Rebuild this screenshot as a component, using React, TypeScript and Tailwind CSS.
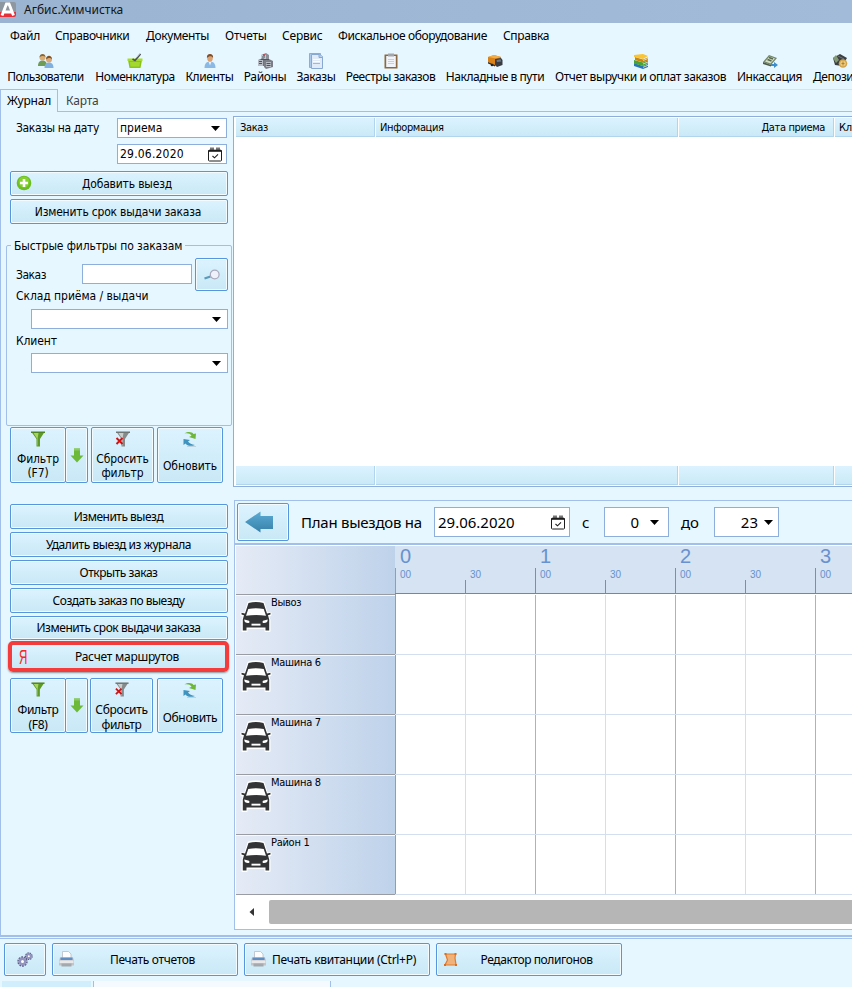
import type { ReactNode } from "react";
import clsx from "clsx";

const ui = "font-['Noto_Sans','Open_Sans',sans-serif] text-[12px]";
const tahoma = "font-['DejaVu_Sans_Condensed','DejaVu_Sans',sans-serif] text-[12px]";

const menu = [
  { label: "Файл", cls: "w-[29px] tracking-[-0.2px]" },
  { label: "Справочники", cls: "w-[75px] tracking-[-0.36px]" },
  { label: "Документы", cls: "w-[63px] tracking-[-0.36px]" },
  { label: "Отчеты", cls: "w-[41px] tracking-[-0.2px]" },
  { label: "Сервис", cls: "w-[40px] tracking-[-0.2px]" },
  { label: "Фискальное оборудование", cls: "w-[149px] tracking-[-0.35px]" },
  { label: "Справка", cls: "w-[46px] tracking-[-0.36px]" },
];

const tools = [
  { label: "Пользователи", icon: <UsersIcon />, cls: "w-[77px] tracking-[-0.48px]" },
  { label: "Номенклатура", icon: <BasketIcon />, cls: "w-[80px] tracking-[-0.45px]" },
  { label: "Клиенты", icon: <ClientIcon />, cls: "w-[47px] tracking-[-0.35px]" },
  { label: "Районы", icon: <DistrictIcon />, cls: "w-[42px] tracking-[-0.35px]" },
  { label: "Заказы", icon: <DocsIcon />, cls: "w-[38px] tracking-[-0.4px]" },
  { label: "Реестры заказов", icon: <ClipboardIcon />, cls: "w-[89px] tracking-[-0.47px]" },
  { label: "Накладные в пути", icon: <TruckIcon />, cls: "w-[98px] tracking-[-0.45px]" },
  { label: "Отчет выручки и оплат заказов", icon: <BooksIcon />, cls: "w-[171px] tracking-[-0.38px]" },
  { label: "Инкассация", icon: <CashIcon />, cls: "w-[65px] tracking-[-0.43px]" },
  { label: "Депозиты", icon: <WalletIcon />, cls: "w-[54px] tracking-[-0.45px]" },
];

const cars = ["Вывоз", "Машина 6", "Машина 7", "Машина 8", "Район 1"];
const hours = [0, 1, 2, 3];

const journalActions = [
  { label: "Изменить выезд", cls: "h-[25px] tracking-[-0.5px]" },
  { label: "Удалить выезд из журнала", cls: "h-[25px] tracking-[-0.43px]" },
  { label: "Открыть заказ", cls: "h-[25px] tracking-[-0.45px]" },
  { label: "Создать заказ по выезду", cls: "h-[25px] tracking-[-0.5px]" },
  { label: "Изменить срок выдачи заказа", cls: "h-[24px] tracking-[-0.44px]" },
];

function UsersIcon() {
  return (
    <svg width="16" height="16" viewBox="0 0 16 16">
      <path d="M0 13c0-4 2-5.500 4.500-5.500S9 9 9 13z" fill="#6d9c56" />
      <circle cx="4.500" cy="4.500" r="3" fill="#d9ad74" />
      <path d="M1.500 4.500C1.500 0 7.500 0 7.500 4 6 2.500 3 2.500 1.500 4.500z" fill="#86683c" />
      <path d="M6.500 15c0-4 2-5.500 4.500-5.500s4.500 1.500 4.500 5.500z" fill="#7fb0e0" />
      <circle cx="11" cy="6.500" r="3" fill="#dba878" />
      <path d="M8 6.500C8 1.500 14 1.500 14 6.500c-1-2-4-2-6 0z" fill="#7c5227" />
    </svg>
  );
}

function BasketIcon() {
  return (
    <svg width="16" height="16" viewBox="0 0 16 16">
      <path d="M1 7h14l-1.500 8h-11z" fill="#8ac416" />
      <path d="M.5 5.500h15V8H.5z" fill="#a4dc2b" />
      <path d="M3 9h10l-.6 4.500H3.600z" fill="#a3d92f" />
      <path d="m5.500 6 2.500 1.500L13.500 1" fill="none" stroke="#4b5055" strokeWidth="1.700" />
      <path d="m9.500 4.500 3.500-4" stroke="#b9c0c4" strokeWidth="1" />
    </svg>
  );
}

function ClientIcon() {
  return (
    <svg width="16" height="16" viewBox="0 0 16 16">
      <path d="M2.500 15c0-4.500 2.200-6.500 5.500-6.500s5.500 2 5.500 6.500z" fill="#8bb9e6" />
      <path d="m6.500 8.500 1.500 4 1.500-4z" fill="#e9f2fb" />
      <ellipse cx="8" cy="5" rx="2.800" ry="3.800" fill="#dba274" />
      <path d="M5 5C4-.5 12-.5 11 5 10 2.500 7 2.500 5 5z" fill="#7a4d2b" />
    </svg>
  );
}

function DistrictIcon() {
  return (
    <svg width="16" height="16" viewBox="0 0 16 16">
      <path d="M4 2 9 0l3 2v5H4z" fill="#8d8f98" />
      <path d="M4 2h5v5H4z" fill="#c4c8d0" />
      <path d="M1 7l5-2 3 2v6H1z" fill="#6f737d" />
      <path d="M7 8l5-2 4 2v6l-7 2-2-2z" fill="#7b7e87" />
      <path d="M1 7h5v6H1zM9 9h5v5H9z" fill="#b7bbc4" />
      <path d="M6 1h2v2H6z" fill="#b8545c" />
      <path d="M2 8.500h3M2 10.500h3M9.500 10.500h4M9.500 12.500h4M5 4h3M4 6.500h8" stroke="#4f535b" />
    </svg>
  );
}

function DocsIcon() {
  return (
    <svg width="16" height="16" viewBox="0 0 16 16">
      <path d="M1.500.5h11v14h-11z" fill="#a9c8ea" stroke="#8badd8" />
      <path d="M3.500 1.500h8l3 2v12h-11z" fill="#e1ebf8" stroke="#86a8d3" />
      <path d="M11 1.500v3h3.500" fill="#b9cfe9" stroke="#86a8d3" />
      <path d="M5 6.500h7M5 8.500h7" stroke="#f8fbff" />
      <path d="M5 10.500h7" stroke="#9db8dc" />
    </svg>
  );
}

function ClipboardIcon() {
  return (
    <svg width="16" height="16" viewBox="0 0 16 16">
      <path d="M1.500 1.500h13v14h-13z" fill="#8d6840" />
      <path d="M3.200 3h9.600v11H3.200z" fill="#f1f4fa" />
      <path d="M5 .5h6v3H5z" fill="#a3a6aa" />
      <path d="M5 6.500h6M5 8.500h6M5 10.500h6" stroke="#c4d0e6" />
    </svg>
  );
}

function TruckIcon() {
  return (
    <svg width="16" height="16" viewBox="0 0 16 16">
      <path d="m1 4 6-2 7 2v7l-5 2-8-4z" fill="#d9821a" />
      <path d="m1 4 6-2 7 2-5 1.500z" fill="#f3ae48" />
      <path d="m8 6 6-1 1.500 2v5L10 14l-2-2z" fill="#3a3c42" />
      <path d="m9.500 7 4-.7.8 2.200-4.300.5z" fill="#6d7987" />
      <path d="m1 9 7 3v1.500L1 10.500z" fill="#302e2c" />
      <circle cx="5" cy="12" r="1.300" fill="#222" />
    </svg>
  );
}

function BooksIcon() {
  return (
    <svg width="16" height="16" viewBox="0 0 16 16">
      <path d="m1 10 9 3 5-2v3l-5 2-9-3z" fill="#2877b9" />
      <path d="m1 7 9 2.500 5-2v3L10 13l-9-2.500z" fill="#49a336" />
      <path d="m2 4 8 2.500 5-2v3L10 9.500 2 7z" fill="#c98712" />
      <path d="m1 2 9-1 5 2-5 3-9-2z" fill="#fac432" />
      <path d="m10 7.500 5-2M10 11l5-2M10 14.300l5-2" stroke="#d9d4bd" />
    </svg>
  );
}

function CashIcon() {
  return (
    <svg width="16" height="16" viewBox="0 0 16 16">
      <path d="m1 9 6-7 8 3-6 7z" fill="#71866a" />
      <path d="m3 8.500 4.500-5 5.500 2L8.500 10.500z" fill="#d1dfc4" />
      <path d="m5.500 6.500 4 1.500M7 4.500l4 1.500" stroke="#56684f" strokeWidth="1.400" />
      <path d="m1 9 8 3v1.500L1 11z" fill="#4c5b4b" />
      <path d="M9 11h3V9l4 3-4 3v-2H9z" fill="#3b8fcd" />
    </svg>
  );
}

function WalletIcon() {
  return (
    <svg width="16" height="16" viewBox="0 0 16 16">
      <path d="m1 5 7-4 7 4-5 8-7-1z" fill="#3c3f41" />
      <path d="m1 5 3-3 3 5-3 3z" fill="#829a74" />
      <path d="m6 3 6 3" stroke="#73787a" />
      <circle cx="11" cy="10.500" r="4.300" fill="#d1a44d" />
      <circle cx="11" cy="10.500" r="2.800" fill="#edcb80" />
      <path d="M11 8.500v4M9.500 10.500h3" stroke="#b2812e" />
    </svg>
  );
}

function CalendarIcon() {
  return (
    <svg width="14" height="15" viewBox="0 0 14 15" fill="none" stroke="#1d1d1d">
      <path d="M.5 3.500h13v10a1 1 0 0 1-1 .5h-11a1 1 0 0 1-1-.5z" strokeWidth="1" />
      <path d="M1 3h12v1.500H1z" fill="#1d1d1d" strokeWidth=".6" />
      <path d="M3 .5v3.500M5 .5v3.500M9 .5v3.500M11 .5v3.500" strokeWidth="1.200" />
      <path d="m4.500 9 2 1.800 3.500-3.500" strokeWidth="1.100" />
    </svg>
  );
}

function FunnelIcon({ cancelled }: { cancelled?: boolean }) {
  return (
    <svg width="16" height="16" viewBox="0 0 16 16">
      <path d="M1.500 1h13L10 8v7.500H6.500V8z" fill={cancelled ? "#858b8a" : "#5f9a24"} />
      <path d="M3.500 2h5L7.500 8v6.500H7V7.500z" fill={cancelled ? "#c9cecd" : "#a5d55f"} />
      <path d="M1 .5h14v1.500H1z" fill={cancelled ? "#6f7674" : "#4f8422"} />
      {cancelled && <path d="m1.500 7 6 6m0-6-6 6" stroke="#d31111" strokeWidth="1.900" />}
    </svg>
  );
}

function RefreshIcon() {
  return (
    <svg width="16" height="17" viewBox="0 0 16 17">
      <path d="M2.500 2.500C6 .3 10 .8 11.500 3l2.500-.5-.5 5.500L7 6l2.500-1.300C8 2.500 6 2 2.500 2.500z" fill="#6fb73a" />
      <path d="M1.500 8 8 9 6 10.500c1.500 2 3.500 3 7 3.500-4 1.500-8 1-9.500-1.500L1.500 14z" fill="#3e93bf" />
      <path d="M5 15.500h9" stroke="#bcd3dd" />
    </svg>
  );
}

function DownArrow() {
  return (
    <svg width="14" height="15" viewBox="0 0 14 15">
      <path d="M4 .5h6v7h3.500L7 14.500.5 7.500H4z" fill="#6dba3b" />
      <path d="M4 .5h6v2H4z" fill="#8ccb61" />
    </svg>
  );
}

function PrinterIcon() {
  return (
    <svg width="15" height="16" viewBox="0 0 15 16">
      <path d="M3.500.5h6l2.500 2.500V8H3.500z" fill="#fdfdfd" stroke="#b9bdc4" strokeWidth=".8" />
      <path d="M1 6.500h13l1 3v5H0v-5z" fill="#c3c4c7" />
      <path d="M1.500 6.500h12V9h-12z" fill="#5e8fc4" />
      <path d="M.5 9.500h14V12H.5z" fill="#e8e8ea" />
      <path d="M2.500 12.500h10v3h-10z" fill="#a5a8ad" />
    </svg>
  );
}

function GearsIcon() {
  return (
    <svg width="16" height="16" viewBox="0 0 16 16" fill="none">
      <circle cx="5.500" cy="9.500" r="4.400" stroke="#5e5e86" strokeWidth="1.600" strokeDasharray="1.800 .9" />
      <circle cx="5.500" cy="9.500" r="2.700" fill="#fff" stroke="#9293bf" strokeWidth="2.400" />
      <circle cx="11.800" cy="4.200" r="3.200" stroke="#5e5e86" strokeWidth="1.400" strokeDasharray="1.500 .7" />
      <circle cx="11.800" cy="4.200" r="1.900" fill="#fff" stroke="#9293bf" strokeWidth="1.800" />
    </svg>
  );
}

function CarIcon() {
  return (
    <svg width="32" height="33" viewBox="0 0 32 33">
      <g stroke="#fff" strokeWidth="2" strokeLinejoin="round" fill="#fff">
        <path d="M8.500 2.500Q16 .5 23.500 2.500L27 14l3.500-1v2l-2.500 1 1.500 4v11h-4v-3h-19v3h-4V20L4 16l-2.500-1v-2L5 14z" />
      </g>
      <path d="M8.500 3Q16 1 23.500 3L27 13.500l3.500-.8v1.800l-2.500.8 1.200 4.200V30.500h-3.700v-3h-19v3H2.800V19.500L4 15.300l-2.500-.8v-1.800l3.500.8z" fill="#333435" />
      <path d="M8.300 9Q16 7.500 23.700 9l2.300 6.800Q16 14.400 6 15.800z" fill="#fff" />
      <path d="M4.300 19.500 9 20.800c1 1.500.3 2.200-1 2.200-2.500 0-3.800-1.200-3.700-3.500zM27.700 19.500 23 20.800c-1 1.500-.3 2.200 1 2.200 2.500 0 3.800-1.200 3.700-3.500z" fill="#fff" />
      <path d="M11.500 23.700h9v1.900h-9z" fill="#fff" />
    </svg>
  );
}

function Caret() {
  return (
    <svg width="9" height="5" viewBox="0 0 9 5" className="shrink-0">
      <path d="M0 0h9L4.500 5z" fill="#000" />
    </svg>
  );
}

function Btn({ children, className }: { children?: ReactNode; className?: string }) {
  return (
    <div
      className={clsx(
        "relative flex shrink-0 items-center justify-center rounded-[2px] border border-[#5596df] bg-linear-to-b from-[#dcf3ff] to-[#c9e8f6] text-black shadow-[inset_0_0_0_1px_#f4fbff]",
        className,
      )}
    >
      {children}
    </div>
  );
}

function Field({ children, className }: { children?: ReactNode; className?: string }) {
  return (
    <div className={clsx("flex shrink-0 items-center border border-[#8eaedb] bg-white", className)}>{children}</div>
  );
}

function FilterButtons({ hotkey, className, resetCls }: { hotkey: string; className: string; resetCls: string }) {
  return (
    <div className={clsx("flex", className)}>
      <Btn className="w-[56px] flex-col !justify-start pt-[3px] text-center">
        <FunnelIcon />
        <span className="mt-[5px]">Фильтр</span>
        <span>{hotkey}</span>
      </Btn>
      <Btn className="-ml-px w-[23px]">
        <DownArrow />
      </Btn>
      <Btn className={clsx("flex-col !justify-start pt-[3px] text-center", resetCls)}>
        <FunnelIcon cancelled />
        <span className="mt-[5px]">Сбросить</span>
        <span>фильтр</span>
      </Btn>
      <Btn className="ml-auto w-[66px] flex-col !justify-start pt-[3px]">
        <RefreshIcon />
        <span className="mt-[11px]">Обновить</span>
      </Btn>
    </div>
  );
}

function Sidebar() {
  return (
    <div className={clsx("flex w-[232px] shrink-0 flex-col pl-[9px] pt-[6px]", tahoma)}>
      <div className="flex h-5 items-center">
        <span className="w-[107px] pl-[6px] tracking-[-0.38px]">Заказы на дату</span>
        <Field className="h-5 w-[110px] justify-between pl-[2px] pr-[6px]">
          приема
          <Caret />
        </Field>
      </div>
      <Field className="ml-[107px] mt-[6px] h-5 w-[110px] justify-between pl-[2px] pr-[4px] tracking-[0.2px]">
        29.06.2020
        <CalendarIcon />
      </Field>
      <Btn className="mt-[7px] h-[25px] w-[218px] pl-[16px] tracking-[-0.18px]">
        <svg width="16" height="16" viewBox="0 0 16 16" className="absolute left-[5px] top-[3px]">
          <circle cx="8" cy="8" r="7.300" fill="#6cbd1e" />
          <circle cx="8" cy="7" r="5.500" fill="#84d030" />
          <path d="M8 4v8M4 8h8" stroke="#fff" strokeWidth="2.600" />
        </svg>
        Добавить выезд
      </Btn>
      <Btn className="mt-[3px] h-[25px] w-[218px] pr-[2px] tracking-[-0.2px]">Изменить срок выдачи заказа</Btn>

      <div className="relative -ml-[4px] mt-[21px] flex h-[181px] w-[226px] shrink-0 flex-col rounded-[2px] border border-[#a0bfea]">
        <span className="absolute -top-[9px] left-[4px] whitespace-nowrap bg-[#e7f7ff] px-[3px] tracking-[-0.12px]">
          Быстрые фильтры по заказам
        </span>
        <div className="mt-[12px] flex h-[33px] items-center">
          <span className="w-[75px] pl-[9px] tracking-[-0.5px]">Заказ</span>
          <Field className="-mt-[2px] h-5 w-[110px]" />
          <Btn className="ml-[3px] h-[33px] w-[33px]">
            <svg width="16" height="12" viewBox="0 0 16 12">
              <path d="m.5 9.500 6-2" stroke="#5a9aba" strokeWidth="2.200" />
              <circle cx="10.700" cy="5.500" r="4.400" fill="#eef0fa" stroke="#a9a9bc" strokeWidth="1.200" />
            </svg>
          </Btn>
        </div>
        <span className="mt-[-4px] pl-[9px] leading-[18px] tracking-[-0.06px]">Склад приёма / выдачи</span>
        <Field className="ml-[24px] mt-[4px] h-5 w-[197px] justify-end pr-[6px]">
          <Caret />
        </Field>
        <span className="mt-[3px] pl-[9px] leading-[18px] tracking-[-0.1px]">Клиент</span>
        <Field className="ml-[24px] mt-[3px] h-5 w-[197px] justify-end pr-[6px]">
          <Caret />
        </Field>
      </div>

      <FilterButtons
        hotkey="(F7)"
        className="mt-px h-[56px] w-[213px] leading-[14px] tracking-[-0.1px]"
        resetCls="ml-[3px] w-[63px]"
      />

      <div className={clsx("mt-[21px] flex flex-col gap-[3px]", ui)}>
        {journalActions.map((a) => (
          <Btn key={a.label} className={clsx("w-[218px] pr-px", a.cls)}>
            {a.label}
          </Btn>
        ))}
      </div>
      <div
        className={clsx(
          "relative -ml-[2px] mt-px flex h-[31px] w-[221px] shrink-0 items-center justify-center rounded-[5px] border-4 border-[#f43c3c] bg-linear-to-b from-[#dcf3ff] to-[#c9e8f6] pl-[17px] tracking-[-0.25px] shadow-[0_1px_2px_#0006]",
          ui,
        )}
      >
        <span className="absolute left-[7px] top-0 origin-left scale-x-[0.55] font-['Liberation_Sans',sans-serif] text-[21px] leading-[23px] tracking-normal text-[#fb2222]">
          Я
        </span>
        Расчет маршрутов
      </div>
      <FilterButtons
        hotkey="(F8)"
        className="mt-[6px] h-[55px] w-[213px] font-['Noto_Sans','Open_Sans',sans-serif] leading-[15px] tracking-[-0.3px]"
        resetCls="ml-[2px] w-[63px]"
      />
    </div>
  );
}

function GridBand({ labels }: { labels?: boolean }) {
  const cell =
    "flex shrink-0 items-center border-b border-r border-[#b1d5ee] bg-linear-to-b from-[#dcf3ff] to-[#cae9f7] px-[4px] pt-[2px]";
  return (
    <div className="flex h-[19px] shrink-0 gap-px font-['DejaVu_Sans_Condensed','DejaVu_Sans',sans-serif] text-[11px] tracking-[-0.37px]">
      <div className={clsx(cell, "w-[139px]")}>{labels && "Заказ"}</div>
      <div className={clsx(cell, "w-[302px]")}>{labels && "Информация"}</div>
      <div className={clsx(cell, "w-[155px] justify-end !pr-[8px]")}>{labels && "Дата приема"}</div>
      <div className={clsx(cell, "w-[80px]")}>{labels && "Клиент"}</div>
    </div>
  );
}

function PlanToolbar() {
  return (
    <div className="flex h-[43px] w-[640px] shrink-0 items-center border border-b-0 border-[#a0bfea] pl-[2px] font-['Noto_Sans','Open_Sans',sans-serif] text-[16px]">
      <Btn className="h-[38px] w-[52px]">
        <svg width="29" height="22" viewBox="0 0 29 22" className="-ml-[7px]">
          <defs>
            <linearGradient id="back" x1="0" y1="0" x2="0" y2="1">
              <stop offset="0" stopColor="#5cacd6" />
              <stop offset="1" stopColor="#3580a8" />
            </linearGradient>
          </defs>
          <path d="M0 11 15.500.5V5H28v13H15.500v3.500z" fill="url(#back)" />
        </svg>
      </Btn>
      <span className="ml-[12px] w-[133px] whitespace-nowrap text-[15px] tracking-[-0.25px]">План выездов на</span>
      <Field className="h-[30px] w-[136px] justify-between pl-[3px] pr-[4px] text-[15px]">
        29.06.2020
        <CalendarIcon />
      </Field>
      <span className="ml-[12px] w-[22px] text-[15px]">с</span>
      <Field className="h-[30px] w-[65px] justify-end gap-[11px] pr-[9px] text-[15px]">
        0
        <Caret />
      </Field>
      <span className="ml-[12px] w-[33px] text-[15px]">до</span>
      <Field className="h-[30px] w-[65px] justify-end gap-[6px] pr-[5px] text-[15px]">
        23
        <Caret />
      </Field>
    </div>
  );
}

function HourHead({ hour }: { hour: number }) {
  return (
    <div className="flex w-[140px] shrink-0 flex-col justify-between font-['Liberation_Sans',Arial,sans-serif] text-[#6792cf]">
      <span className="pl-[5px] text-[20px] leading-[21px]">{hour}</span>
      <div className="flex h-[25px] items-end text-[10px] leading-[10px]">
        <div className={clsx("h-[25px] w-[70px] border-l pl-[4px] pt-[2px]", hour === 0 ? "border-[#999ca2]" : "border-[#6792cf]")}>
          00
        </div>
        <div className="flex h-[25px] w-[70px] items-end">
          <span className="h-[13px] w-px bg-[#6792cf]" />
          <span className="self-start pl-[4px] pt-[2px]">30</span>
        </div>
      </div>
    </div>
  );
}

function Scheduler() {
  return (
    <div className="flex w-[640px] shrink-0 flex-col border border-t-2 border-[#a0bfea] bg-white pl-px pt-px">
      <div className="flex h-[49px] shrink-0">
        <div className="w-[160px] shrink-0 border-b border-r border-[#999ca2] bg-linear-to-r from-[#e5ebf6] to-[#bed2ea]" />
        <div className="-ml-px flex h-[48px] border-b border-[#7d858d] bg-[#d5e3f2]">
          {hours.map((h) => (
            <HourHead key={h} hour={h} />
          ))}
        </div>
      </div>
      {cars.map((name) => (
        <div key={name} className="flex h-[60px] shrink-0">
          <div className="flex w-[160px] shrink-0 border-b border-r border-t border-b-[#999ca2] border-r-[#999ca2] border-t-[#f6f9fd] bg-linear-to-r from-[#e5ebf6] to-[#bed2ea] pl-[4px] pt-[4px]">
            <CarIcon />
            <span className="-ml-px -mt-[4px] font-['DejaVu_Sans_Condensed','DejaVu_Sans',sans-serif] text-[11px] leading-[14px] tracking-[-0.28px]">
              {name}
            </span>
          </div>
          <div className="-ml-px flex border-b border-[#d3dff0]">
            {hours.map((h) => (
              <div key={h} className="flex w-[140px] shrink-0">
                <div className={clsx("w-[70px] border-l", h === 0 ? "border-[#999ca2]" : "border-[#9cb6d9]")} />
                <div className="w-[70px] border-l border-[#d3dff0]" />
              </div>
            ))}
          </div>
        </div>
      ))}
      <div className="mt-[5px] flex h-6 shrink-0 items-center">
        <svg width="5" height="8" viewBox="0 0 5 8" className="ml-[13px]">
          <path d="M5 0v8L.5 4z" fill="#333" />
        </svg>
        <div className="ml-[15px] h-6 flex-1 rounded-l-[2px] bg-[#b6b6b6]" />
      </div>
      <div className="h-[5px] shrink-0" />
    </div>
  );
}

export default function App() {
  return (
    <div className={clsx("flex h-[987px] w-[852px] flex-col overflow-hidden bg-[#e7f7ff] leading-[18px] text-black", ui)}>
      <div className="flex h-[23px] shrink-0 items-center gap-[8px] bg-linear-to-r from-[#9ab4d2] to-[#a1bbd8]">
        <svg width="16" height="17" viewBox="0 0 16 17" className="-mt-[4px]">
          <path d="M0 1h14a2 2 0 0 1 2 2v8H0z" fill="#8e969f" />
          <path d="M0 11h16v3a2 2 0 0 1-2 2H0z" fill="#e5303a" />
          <path d="M2 14.500 6.500 3h2.500l4.500 11.500M3.500 11h8" stroke="#fff" strokeWidth="2.900" fill="none" />
        </svg>
        <span className="-mt-[4px] text-[#10151c]">Агбис.Химчистка</span>
      </div>

      <div className="flex h-[26px] shrink-0 items-center gap-4 whitespace-nowrap pl-[10px]">
        {menu.map((m) => (
          <span key={m.label} className={clsx("shrink-0", m.cls)}>
            {m.label}
          </span>
        ))}
      </div>

      <div className="flex h-[40px] shrink-0 gap-[11px] whitespace-nowrap pl-[7px] pt-[4px]">
        {tools.map((t) => (
          <div key={t.label} className={clsx("flex shrink-0 flex-col items-center", t.cls)}>
            {t.icon}
            <span className="-mt-px">{t.label}</span>
          </div>
        ))}
      </div>

      <div className="flex h-[23px] shrink-0">
        <div className="w-[58px] border-l border-r border-t border-[#a0bfea] pl-[6px] pt-[2px] tracking-[-0.2px]">
          Журнал
        </div>
        <div className="w-[48px] border-b border-[#a0bfea] pl-[8px] pt-[3px] tracking-[-0.2px] text-[#3d4247]">Карта</div>
        <div className="flex-1 border-b border-t border-b-[#a0bfea] border-t-[#cfe4f7]" />
      </div>

      <div className="flex h-[823px] shrink-0 border-l border-[#a0bfea]">
        <Sidebar />
        <div className="flex flex-1 flex-col overflow-hidden pt-[4px]">
          <div className="flex h-[371px] w-[640px] shrink-0 flex-col justify-between border border-[#8eaedb] bg-white px-px py-px pl-[2px]">
            <GridBand labels />
            <GridBand />
          </div>
          <div className="ml-px mt-[13px] flex flex-col">
            <PlanToolbar />
            <Scheduler />
          </div>
        </div>
      </div>

      <div className="h-[4px] shrink-0 border-b border-t-2 border-[#a0bfea]" />

      <div className="mt-[4px] flex h-[33px] shrink-0 gap-[6px] pl-[4px]">
        <Btn className="w-[42px]">
          <GearsIcon />
        </Btn>
        <Btn className="w-[186px] pl-[15px] tracking-[-0.33px]">
          <span className="absolute left-[6px] top-[7px]">
            <PrinterIcon />
          </span>
          Печать отчетов
        </Btn>
        <Btn className="w-[186px] pl-[14px] tracking-[-0.28px]">
          <span className="absolute left-[6px] top-[7px]">
            <PrinterIcon />
          </span>
          Печать квитанции (Ctrl+P)
        </Btn>
        <Btn className="w-[186px] pl-[15px] tracking-[-0.41px]">
          <svg width="13" height="13" viewBox="0 0 13 13" className="absolute left-[7px] top-[9px]">
            <path d="M1.500 1h10l-.5 4 1 7H1l2.500-5z" fill="#efb27a" stroke="#e27a2c" strokeWidth="1.200" />
            <path d="M.5 0h2v2h-2zM10.500 0h2v2h-2zM0 11h2v2H0zM11 11h2v2h-2z" fill="#dc6d1c" />
          </svg>
          Редактор полигонов
        </Btn>
      </div>

      <div className="mt-[5px] flex h-[6px] shrink-0">
        <div className="ml-[2px] w-[89px] bg-[#d0eefb]" />
        <div className="ml-[2px] w-[238px] border-l border-r border-[#a0bfea] bg-[#f4faff]" />
      </div>
    </div>
  );
}
